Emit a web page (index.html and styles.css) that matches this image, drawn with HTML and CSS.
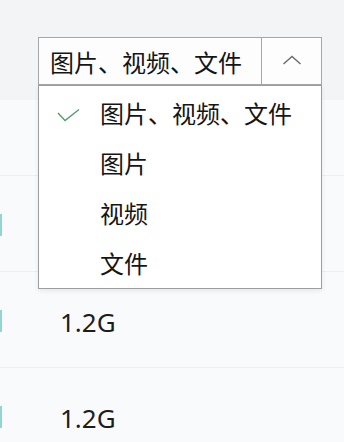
FILE: index.html
```html
<!DOCTYPE html>
<html lang="zh-CN">
<head>
<meta charset="utf-8">
<link rel="stylesheet" href="styles.css">
</head>
<body>
<div class="page">
  <header class="toolbar">
    <div class="select">
      <div class="select-box">
        <span class="select-value">图片、视频、文件</span>
        <span class="select-arrow">
          <svg width="20" height="10" viewBox="0 0 20 10"><polyline points="1.5,9 10,1.5 18.5,9" fill="none" stroke="#6b6b6b" stroke-width="1.4"/></svg>
        </span>
      </div>
      <ul class="menu">
        <li class="menu-item">
          <span class="check"><svg width="24" height="14" viewBox="0 0 24 14"><polyline points="1,5 8,12.5 22,1.5" fill="none" stroke="#4f9a6c" stroke-width="1.3"/></svg></span>
          <span class="label">图片、视频、文件</span>
        </li>
        <li class="menu-item"><span class="check"></span><span class="label">图片</span></li>
        <li class="menu-item"><span class="check"></span><span class="label">视频</span></li>
        <li class="menu-item"><span class="check"></span><span class="label">文件</span></li>
      </ul>
    </div>
  </header>
  <div class="row row-first"></div>
  <div class="row"><span class="mark"></span></div>
  <div class="row"><span class="mark"></span><span class="size">1.2G</span></div>
  <div class="row"><span class="mark"></span><span class="size">1.2G</span></div>
</div>
</body>
</html>
```
FILE: styles.css
```css
* { box-sizing: border-box; }
html, body { margin: 0; padding: 0; }
body {
  background: #f9fafc;
  font-family: "Noto Sans", "Noto Sans CJK SC", sans-serif;
  color: #1b1b1b;
  overflow: hidden;
}
.page { width: 344px; height: 442px; overflow: hidden; }
.toolbar {
  height: 100px;
  background: #f3f4f6;
  padding: 37px 0 0 38px;
}
.select {
  position: relative;
  width: 284px;
  z-index: 2;
}
.select-box {
  display: flex;
  height: 48px;
  border: 1px solid #a6a6a6;
  background: #fdfdfe;
}
.select-value {
  flex: 1;
  display: flex;
  align-items: center;
  padding-left: 11px;
  font-family: "Noto Sans CJK SC", sans-serif;
  font-size: 24px;
  line-height: 1.2;
  padding-top: 2px;
  color: #151515;
}
.select-arrow {
  width: 60px;
  border-left: 1px solid #a6a6a6;
  display: flex;
  align-items: center;
  justify-content: center;
  padding-bottom: 3px;
}
.menu {
  position: absolute;
  top: 48px;
  left: 0;
  width: 284px;
  margin: 0;
  padding: 2px 0 0;
  list-style: none;
  background: #fff;
  border: 1px solid #9e9e9e;
  box-shadow: 0 2px 5px rgba(0,0,0,0.08);
}
.menu-item {
  height: 50px;
  display: flex;
  align-items: center;
  font-family: "Noto Sans CJK SC", sans-serif;
  font-size: 24px;
  line-height: 1.2;
  color: #151515;
}
.check {
  width: 61px;
  padding-left: 18px;
  display: flex;
  align-items: center;
  padding-top: 4px;
}
.row {
  display: flex;
  align-items: center;
  height: 96px;
  border-top: 1px solid #eceef1;
  padding-top: 6px;
}
.row-first { height: 75px; border-top: none; }
.mark {
  width: 2px;
  height: 22px;
  background: #93d5d4;
  margin-top: -4px;
}
.size {
  margin-left: 58px;
  font-size: 26px;
  line-height: 1.2;
  color: #1d1d1d;
}
```
